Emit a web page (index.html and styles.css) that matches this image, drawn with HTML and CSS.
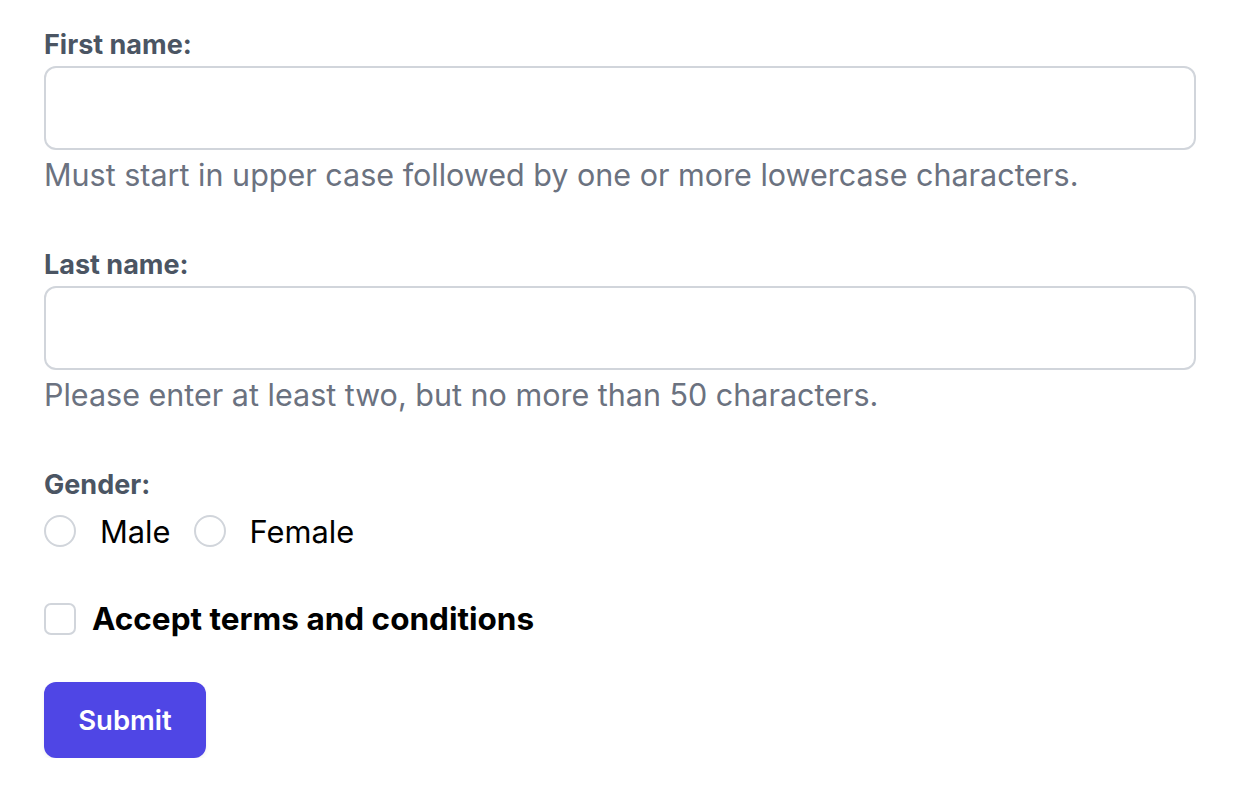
FILE: index.html
```html
<!DOCTYPE html>
<html>
<head>
<meta charset="utf-8">
<link rel="stylesheet" href="styles.css">
</head>
<body>
<form class="form">
  <div class="field">
    <label class="label" for="first">First name:</label>
    <input class="input" id="first" type="text">
    <p class="help">Must start in upper case followed by one or more lowercase characters.</p>
  </div>
  <div class="field">
    <label class="label" for="last">Last name:</label>
    <input class="input" id="last" type="text">
    <p class="help">Please enter at least two, but no more than 50 characters.</p>
  </div>
  <div class="field gender">
    <span class="label">Gender:</span>
    <div class="radios">
      <label class="radio-opt"><span class="radio"></span><span class="radio-text">Male</span></label>
      <label class="radio-opt"><span class="radio"></span><span class="radio-text">Female</span></label>
    </div>
  </div>
  <label class="terms"><span class="checkbox"></span><span class="terms-text">Accept terms and conditions</span></label>
  <div class="actions">
    <button class="submit" type="button">Submit</button>
  </div>
</form>
</body>
</html>
```
FILE: styles.css
```css
* { box-sizing: border-box; }
html, body { margin: 0; padding: 0; background: #fff; }
body { font-family: Inter, "Noto Sans", sans-serif; }
.form { padding: 28px 48px 0 44px; display: flex; flex-direction: column; }
.field { display: flex; flex-direction: column; }
.label { font-size: 27px; font-weight: 700; color: #4b5563; line-height: 34px; margin-bottom: 4px; }
.input { display: block; width: 100%; height: 84px; border: 2px solid #d1d5db; border-radius: 12px; background: #fff; font-size: 28px; padding: 0 20px; }
.help { margin: 6px 0 0; font-size: 30.5px; line-height: 38px; color: #6b7280; height: 92px; }
.radios { display: flex; align-items: center; gap: 23px; margin-top: 5px; height: 40px; }
.radio-opt { display: flex; align-items: center; gap: 24px; }
.radio { width: 32px; height: 32px; border: 2px solid #d1d5db; border-radius: 50%; background: #fff; }
.radio-text { font-size: 30.8px; color: #000; }
.terms { display: flex; align-items: center; gap: 16px; margin-top: 48px; }
.checkbox { width: 32px; height: 32px; border: 2px solid #d1d5db; border-radius: 7px; }
.terms-text { font-size: 31.5px; font-weight: 700; color: #000; }
.actions { margin-top: 44px; }
.submit { width: 162px; height: 76px; border: none; border-radius: 12px; background: #4f46e5; color: #fff; font-family: Inter, sans-serif; font-size: 27.5px; font-weight: 600; box-shadow: 0 2px 4px rgba(0,0,0,0.06); }
```
